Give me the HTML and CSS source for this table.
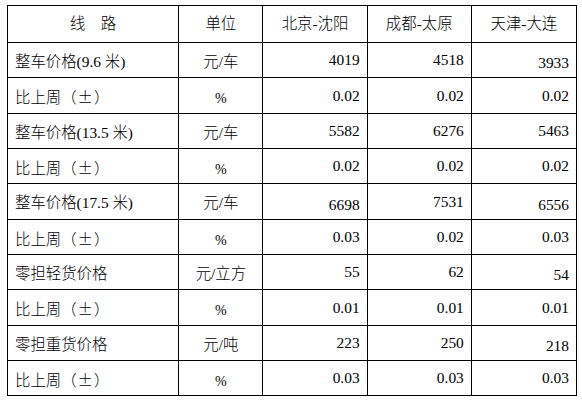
FILE: index.html
```html
<!DOCTYPE html>
<html lang="zh">
<head>
<meta charset="utf-8">
<title>运价表</title>
<link rel="stylesheet" href="styles.css">
</head>
<body>
<table class="price">
  <colgroup>
    <col class="c-name"><col class="c-unit"><col class="c-num"><col class="c-num"><col class="c-last">
  </colgroup>
  <tr class="head">
    <td class="name-h">线　路</td>
    <td class="unit-h">单位</td>
    <td class="city">北京-沈阳</td>
    <td class="city">成都-太原</td>
    <td class="city">天津-大连</td>
  </tr>
  <tr class="r35">
    <td class="name">整车价格(9.6 米)</td>
    <td class="unit">元/车</td>
    <td class="num">4019</td>
    <td class="num">4518</td>
    <td class="num low">3933</td>
  </tr>
  <tr class="r36">
    <td class="name">比上周<span class="pm">（±）</span></td>
    <td class="unit pct">%</td>
    <td class="num">0.02</td>
    <td class="num">0.02</td>
    <td class="num">0.02</td>
  </tr>
  <tr class="r35">
    <td class="name">整车价格(13.5 米)</td>
    <td class="unit">元/车</td>
    <td class="num">5582</td>
    <td class="num">6276</td>
    <td class="num">5463</td>
  </tr>
  <tr class="r35">
    <td class="name">比上周<span class="pm">（±）</span></td>
    <td class="unit pct">%</td>
    <td class="num">0.02</td>
    <td class="num">0.02</td>
    <td class="num">0.02</td>
  </tr>
  <tr class="r36">
    <td class="name">整车价格(17.5 米)</td>
    <td class="unit">元/车</td>
    <td class="num low">6698</td>
    <td class="num">7531</td>
    <td class="num low">6556</td>
  </tr>
  <tr class="r35">
    <td class="name">比上周<span class="pm">（±）</span></td>
    <td class="unit pct">%</td>
    <td class="num">0.03</td>
    <td class="num">0.02</td>
    <td class="num">0.03</td>
  </tr>
  <tr class="r35">
    <td class="name">零担轻货价格</td>
    <td class="unit">元/立方</td>
    <td class="num">55</td>
    <td class="num">62</td>
    <td class="num low">54</td>
  </tr>
  <tr class="r36">
    <td class="name">比上周<span class="pm">（±）</span></td>
    <td class="unit pct">%</td>
    <td class="num">0.01</td>
    <td class="num">0.01</td>
    <td class="num">0.01</td>
  </tr>
  <tr class="r35">
    <td class="name">零担重货价格</td>
    <td class="unit">元/吨</td>
    <td class="num">223</td>
    <td class="num">250</td>
    <td class="num low">218</td>
  </tr>
  <tr class="r35">
    <td class="name">比上周<span class="pm">（±）</span></td>
    <td class="unit pct">%</td>
    <td class="num">0.03</td>
    <td class="num">0.03</td>
    <td class="num">0.03</td>
  </tr>
</table>
</body>
</html>
```
FILE: styles.css
```css
html, body {
  margin: 0;
  padding: 0;
  background: #ffffff;
}
body {
  padding: 5px 0 0 7px;
}
.price {
  border-collapse: collapse;
  table-layout: fixed;
  width: 570px;
  font-family: "Liberation Serif", "Noto Sans CJK SC", serif;
  font-size: 15.4px;
  font-weight: 300;
  color: #000;
}
.c-name { width: 171px; }
.c-unit { width: 84px; }
.c-num { width: 104px; }
.c-last { width: 105px; }
.price td {
  box-sizing: border-box;
  border: 1px solid #000;
  padding: 0;
  line-height: 18px;
  vertical-align: middle;
  white-space: nowrap;
  overflow: hidden;
}
.head td { height: 37px; }
.r35 td { height: 35px; }
.r36 td { height: 36px; }
.name-h, .unit-h, .unit, .city {
  text-align: center;
}
.name-h { padding-top: 1px; }
.name {
  text-align: left;
  padding: 3px 0 0 7px !important;
}
.pm {
  font-family: "Noto Sans CJK SC", sans-serif;
  letter-spacing: 1px;
}
.unit { padding-top: 3px !important; }
.pct { padding-top: 7px !important; font-size: 14px; }
.num {
  text-align: right;
  padding: 0 7px 0 0 !important;
}
.num.low { padding-top: 6px !important; }
```
